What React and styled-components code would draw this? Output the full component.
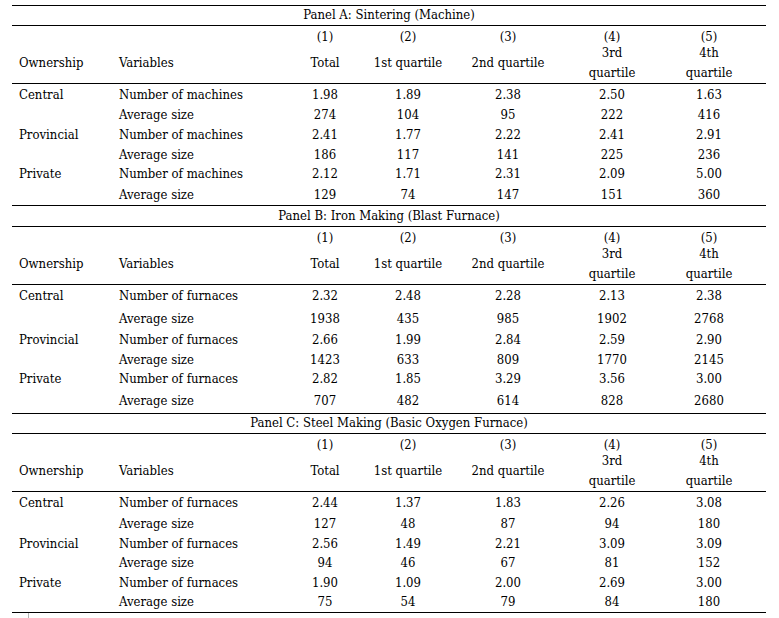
import React from "react";
import styled, { createGlobalStyle } from "styled-components";

const Global = createGlobalStyle`
  html, body { margin: 0; padding: 0; background: #fff; }
  body { font-family: "DejaVu Serif", "Liberation Serif", serif; color: #000; }
`;

const COLS = "100px 178px 70px 96px 104px 104px 102px";

const Page = styled.div`
  padding: 5px 0 0 12px;
  width: 754px;
`;

const Table = styled.div`
  width: 754px;
  border-top: 1px solid #000;
  border-bottom: 1px solid #000;
  font-size: 13px;
  font-stretch: semi-condensed;
`;

const Row = styled.div`
  display: grid;
  grid-template-columns: ${COLS};
  align-items: center;
  box-sizing: border-box;
  height: ${(p) => p.$h}px;
  padding-top: ${(p) => p.$pt || 0}px;
  padding-bottom: ${(p) => p.$pb || 0}px;
  border-top: ${(p) => (p.$rule ? "1px solid #000" : "none")};
`;

const TitleCell = styled.div`
  grid-column: 1 / -1;
  text-align: center;
  line-height: 14px;
  white-space: nowrap;
`;

const Cell = styled.div`
  text-align: ${(p) => (p.$left ? "left" : "center")};
  padding-left: ${(p) => (p.$left ? "7px" : "0")};
  padding-right: ${(p) => (p.$last ? "12px" : "0")};
  line-height: 14px;
  white-space: nowrap;
`;

const StackCell = styled(Cell)`
  line-height: 20px;
`;

const Tick = styled.div`
  margin-left: 16px;
  width: 1px;
  height: 5px;
  background: #b5b5b5;
`;

const panels = [
  {
    title: "Panel A: Sintering (Machine)",
    noun: "machines",
    titleH: 19,
    rows: [22, 20, 20, 19, 20, 21],
    data: [
      ["Central", ["1.98", "1.89", "2.38", "2.50", "1.63"], ["274", "104", "95", "222", "416"]],
      ["Provincial", ["2.41", "1.77", "2.22", "2.41", "2.91"], ["186", "117", "141", "225", "236"]],
      ["Private", ["2.12", "1.71", "2.31", "2.09", "5.00"], ["129", "74", "147", "151", "360"]],
    ],
  },
  {
    title: "Panel B: Iron Making (Blast Furnace)",
    noun: "furnaces",
    titleH: 21,
    rows: [23, 23, 20, 19, 20, 24],
    data: [
      ["Central", ["2.32", "2.48", "2.28", "2.13", "2.38"], ["1938", "435", "985", "1902", "2768"]],
      ["Provincial", ["2.66", "1.99", "2.84", "2.59", "2.90"], ["1423", "633", "809", "1770", "2145"]],
      ["Private", ["2.82", "1.85", "3.29", "3.56", "3.00"], ["707", "482", "614", "828", "2680"]],
    ],
  },
  {
    title: "Panel C: Steel Making (Basic Oxygen Furnace)",
    noun: "furnaces",
    titleH: 20,
    rows: [22, 21, 19, 20, 19, 20],
    data: [
      ["Central", ["2.44", "1.37", "1.83", "2.26", "3.08"], ["127", "48", "87", "94", "180"]],
      ["Provincial", ["2.56", "1.49", "2.21", "3.09", "3.09"], ["94", "46", "67", "81", "152"]],
      ["Private", ["1.90", "1.09", "2.00", "2.69", "3.00"], ["75", "54", "79", "84", "180"]],
    ],
  },
];

const nums = ["(1)", "(2)", "(3)", "(4)", "(5)"];

function Values({ values }) {
  return values.map((v, i) => (
    <Cell key={i} $last={i === 4}>
      {v}
    </Cell>
  ));
}

function Panel({ panel, first }) {
  return (
    <>
      <Row $h={panel.titleH} $rule={!first} $pb={1}>
        <TitleCell>{panel.title}</TitleCell>
      </Row>
      <Row $h={16} $rule $pt={4}>
        <Cell $left />
        <Cell $left />
        {nums.map((n, i) => (
          <Cell key={n} $last={i === 4}>
            {n}
          </Cell>
        ))}
      </Row>
      <Row $h={42} $pt={2}>
        <Cell $left>Ownership</Cell>
        <Cell $left>Variables</Cell>
        <Cell>Total</Cell>
        <Cell>1st quartile</Cell>
        <Cell>2nd quartile</Cell>
        <StackCell>
          3rd
          <br />
          quartile
        </StackCell>
        <StackCell $last>
          4th
          <br />
          quartile
        </StackCell>
      </Row>
      {panel.data.map(([owner, count, size], gi) => (
        <React.Fragment key={owner}>
          <Row $h={panel.rows[gi * 2]} $rule={gi === 0}>
            <Cell $left>{owner}</Cell>
            <Cell $left>Number of {panel.noun}</Cell>
            <Values values={count} />
          </Row>
          <Row $h={panel.rows[gi * 2 + 1]}>
            <Cell $left />
            <Cell $left>Average size</Cell>
            <Values values={size} />
          </Row>
        </React.Fragment>
      ))}
    </>
  );
}

export default function App() {
  return (
    <Page>
      <Global />
      <Table>
        {panels.map((p, i) => (
          <Panel key={p.title} panel={p} first={i === 0} />
        ))}
      </Table>
      <Tick />
    </Page>
  );
}
